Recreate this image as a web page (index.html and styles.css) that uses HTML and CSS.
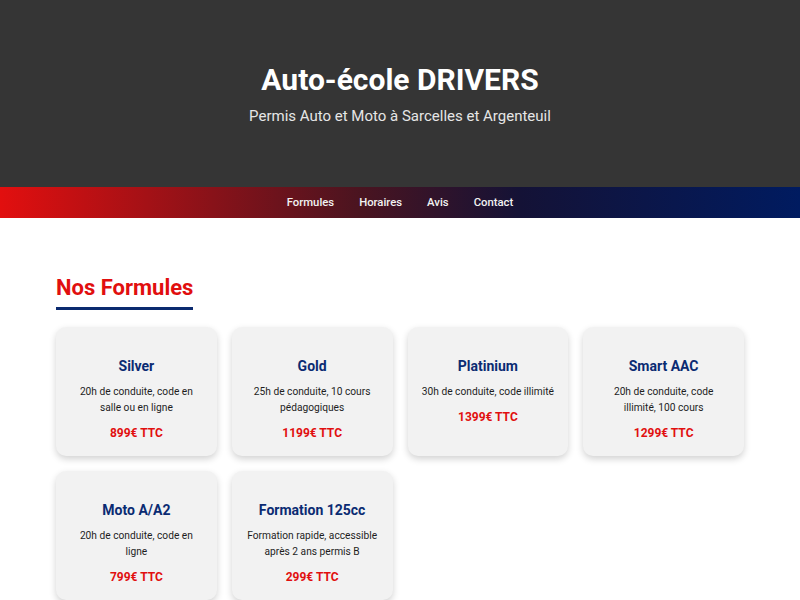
FILE: index.html
```html
<!DOCTYPE html>
<html lang="fr">
<head>
<meta charset="utf-8">
<title>Auto-école DRIVERS</title>
<link rel="stylesheet" href="styles.css">
</head>
<body>
<header class="hero">
  <h1 class="hero-title">Auto-école DRIVERS</h1>
  <p class="hero-sub">Permis Auto et Moto à Sarcelles et Argenteuil</p>
</header>
<nav class="nav">
  <a href="#formules">Formules</a>
  <a href="#horaires">Horaires</a>
  <a href="#avis">Avis</a>
  <a href="#contact">Contact</a>
</nav>
<main class="main">
  <section class="section" id="formules">
    <h2 class="section-title">Nos Formules</h2>
    <div class="cards">
      <div class="card">
        <h3 class="card-title">Silver</h3>
        <p class="card-desc">20h de conduite, code en salle ou en ligne</p>
        <p class="card-price">899€ TTC</p>
      </div>
      <div class="card">
        <h3 class="card-title">Gold</h3>
        <p class="card-desc">25h de conduite, 10 cours pédagogiques</p>
        <p class="card-price">1199€ TTC</p>
      </div>
      <div class="card">
        <h3 class="card-title">Platinium</h3>
        <p class="card-desc">30h de conduite, code illimité</p>
        <p class="card-price">1399€ TTC</p>
      </div>
      <div class="card">
        <h3 class="card-title">Smart AAC</h3>
        <p class="card-desc">20h de conduite, code illimité, 100 cours</p>
        <p class="card-price">1299€ TTC</p>
      </div>
      <div class="card">
        <h3 class="card-title">Moto A/A2</h3>
        <p class="card-desc">20h de conduite, code en ligne</p>
        <p class="card-price">799€ TTC</p>
      </div>
      <div class="card">
        <h3 class="card-title">Formation 125cc</h3>
        <p class="card-desc">Formation rapide, accessible après 2 ans permis B</p>
        <p class="card-price">299€ TTC</p>
      </div>
    </div>
  </section>
</main>
</body>
</html>
```
FILE: styles.css
```css
* { box-sizing: border-box; }
html, body { margin: 0; padding: 0; }
body {
  font-family: Roboto, "Liberation Sans", Arial, sans-serif;
  background: #ffffff;
  color: #222222;
}
.hero {
  background: #353535;
  color: #ffffff;
  height: 187px;
  display: flex;
  flex-direction: column;
  align-items: center;
  padding-top: 62px;
}
.hero-title {
  margin: 0;
  font-size: 30px;
  line-height: 36px;
  font-weight: 700;
}
.hero-sub {
  margin: 8px 0 0;
  font-size: 15px;
  line-height: 20px;
  color: #e6e6e6;
}
.nav {
  height: 31px;
  background: linear-gradient(90deg, #e20f0f 0%, #4a1420 45%, #141236 65%, #001b60 100%);
  display: flex;
  justify-content: center;
  align-items: center;
  gap: 25px;
}
.nav a {
  color: #f2f2f2;
  text-decoration: none;
  font-size: 11.3px;
  font-weight: 500;
}
.main {
  padding: 56px 56px 40px;
}
.section-title {
  display: inline-block;
  margin: 0 0 17px;
  font-size: 22px;
  line-height: 28px;
  font-weight: 700;
  color: #e10f0f;
  padding-bottom: 5px;
  border-bottom: 3px solid #0b2a6f;
}
.cards {
  display: grid;
  grid-template-columns: repeat(4, 1fr);
  gap: 15px;
}
.card {
  background: #f2f2f2;
  border-radius: 10px;
  box-shadow: 0 3px 7px rgba(0, 0, 0, 0.18);
  padding: 29px 13.5px 15px;
  text-align: center;
}
.card-title {
  margin: 0;
  font-size: 14px;
  line-height: 20px;
  font-weight: 700;
  color: #0a2b72;
}
.card-desc {
  margin: 8px 0 0;
  font-size: 10.2px;
  line-height: 16px;
  color: #1e1e1e;
}
.card-price {
  margin: 9px 0 0;
  font-size: 12px;
  line-height: 16px;
  font-weight: 700;
  color: #e10f0f;
}
```
